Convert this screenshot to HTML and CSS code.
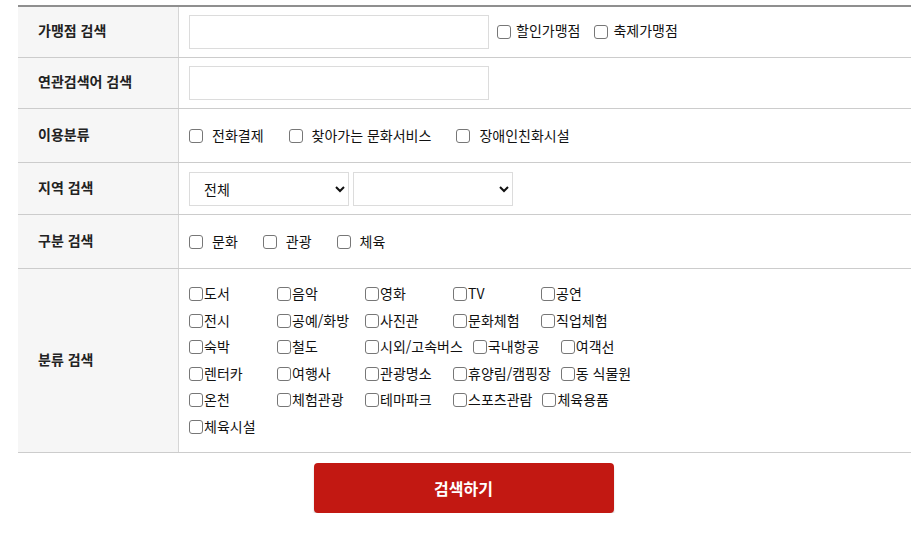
FILE: index.html
```html
<!DOCTYPE html>
<html lang="ko">
<head>
<meta charset="utf-8">
<title>가맹점 검색</title>
<link rel="stylesheet" href="styles.css">
</head>
<body>
<div class="wrap">
  <div class="form">
    <div class="row r1">
      <div class="th">가맹점 검색</div>
      <div class="td">
        <input type="text" class="txt">
        <label class="chk first"><input type="checkbox"><span>할인가맹점</span></label>
        <label class="chk second"><input type="checkbox"><span>축제가맹점</span></label>
      </div>
    </div>
    <div class="row r2">
      <div class="th">연관검색어 검색</div>
      <div class="td"><input type="text" class="txt"></div>
    </div>
    <div class="row r3">
      <div class="th">이용분류</div>
      <div class="td spaced">
        <label class="opt"><input type="checkbox"><span>전화결제</span></label>
        <label class="opt"><input type="checkbox"><span>찾아가는 문화서비스</span></label>
        <label class="opt"><input type="checkbox"><span>장애인친화시설</span></label>
      </div>
    </div>
    <div class="row r4">
      <div class="th">지역 검색</div>
      <div class="td">
        <select class="sel"><option>전체</option></select>
        <select class="sel"><option></option></select>
      </div>
    </div>
    <div class="row r5">
      <div class="th">구분 검색</div>
      <div class="td spaced">
        <label class="opt"><input type="checkbox"><span>문화</span></label>
        <label class="opt"><input type="checkbox"><span>관광</span></label>
        <label class="opt"><input type="checkbox"><span>체육</span></label>
      </div>
    </div>
    <div class="row r6">
      <div class="th">분류 검색</div>
      <div class="td">
        <div class="cats">
          <label class="cat"><input type="checkbox"><span>도서</span></label>
          <label class="cat"><input type="checkbox"><span>음악</span></label>
          <label class="cat"><input type="checkbox"><span>영화</span></label>
          <label class="cat"><input type="checkbox"><span>TV</span></label>
          <label class="cat"><input type="checkbox"><span>공연</span></label>
          <span class="br"></span>
          <label class="cat"><input type="checkbox"><span>전시</span></label>
          <label class="cat"><input type="checkbox"><span>공예/화방</span></label>
          <label class="cat"><input type="checkbox"><span>사진관</span></label>
          <label class="cat"><input type="checkbox"><span>문화체험</span></label>
          <label class="cat"><input type="checkbox"><span>직업체험</span></label>
          <span class="br"></span>
          <label class="cat"><input type="checkbox"><span>숙박</span></label>
          <label class="cat"><input type="checkbox"><span>철도</span></label>
          <label class="cat"><input type="checkbox"><span>시외/고속버스</span></label>
          <label class="cat"><input type="checkbox"><span>국내항공</span></label>
          <label class="cat"><input type="checkbox"><span>여객선</span></label>
          <span class="br"></span>
          <label class="cat"><input type="checkbox"><span>렌터카</span></label>
          <label class="cat"><input type="checkbox"><span>여행사</span></label>
          <label class="cat"><input type="checkbox"><span>관광명소</span></label>
          <label class="cat"><input type="checkbox"><span>휴양림/캠핑장</span></label>
          <label class="cat"><input type="checkbox"><span>동 식물원</span></label>
          <span class="br"></span>
          <label class="cat"><input type="checkbox"><span>온천</span></label>
          <label class="cat"><input type="checkbox"><span>체험관광</span></label>
          <label class="cat"><input type="checkbox"><span>테마파크</span></label>
          <label class="cat"><input type="checkbox"><span>스포츠관람</span></label>
          <label class="cat"><input type="checkbox"><span>체육용품</span></label>
          <span class="br"></span>
          <label class="cat"><input type="checkbox"><span>체육시설</span></label>
        </div>
      </div>
    </div>
  </div>
  <div class="actions">
    <button type="button" class="btn">검색하기</button>
  </div>
</div>
</body>
</html>
```

FILE: styles.css
```css
* { box-sizing: border-box; }
html, body { margin: 0; padding: 0; background: #fff; }
body {
  font-family: "Noto Sans CJK KR", "Noto Sans", sans-serif;
  font-size: 14px;
  color: #222;
}
.wrap {
  width: 893px;
  margin-left: 18px;
  padding-top: 5px;
}
.form {
  border-top: 2px solid #8f8f8f;
}
.row {
  display: grid;
  grid-template-columns: 161px 1fr;
  border-bottom: 1px solid #cccccc;
}
.r1 { height: 51px; }
.r2 { height: 51px; }
.r3 { height: 54px; }
.r4 { height: 52px; }
.r5 { height: 54px; }
.r6 { height: 184px; }
.th {
  background: #f6f6f6;
  border-right: 1px solid #d6d6d6;
  display: flex;
  align-items: center;
  padding-left: 20px;
  padding-bottom: 4px;
  font-weight: bold;
  font-size: 14px;
  color: #222;
}
.td {
  display: flex;
  align-items: center;
  padding: 0 10px;
}
.txt {
  width: 300px;
  height: 34px;
  border: 1px solid #dcdcdc;
  background: #fff;
  margin: 0;
  padding: 0 8px;
  font: inherit;
}
input[type="checkbox"] {
  -webkit-appearance: none;
  appearance: none;
  width: 14px;
  height: 14px;
  margin: 0;
  border: 1px solid #777;
  border-radius: 3px;
  background: #fff;
  flex: none;
}
label {
  display: inline-flex;
  align-items: center;
  white-space: nowrap;
  line-height: 20px;
  color: #111;
}
.chk span { padding-bottom: 4px; }
.opt span { padding-bottom: 2px; }
.cat span { padding-bottom: 2px; }
.chk input { margin-right: 5px; }
.chk.first { margin-left: 8px; }
.chk.second { margin-left: 14px; }
.spaced { gap: 25px; }
.opt input { margin-right: 9px; }
.sel {
  width: 160px;
  height: 34px;
  border: 1px solid #dcdcdc;
  background: #fff;
  margin: 0 4px 0 0;
  padding: 0 6px 0 10px;
  font: inherit;
  color: #111;
}
.cats {
  display: flex;
  flex-wrap: wrap;
  column-gap: 10px;
  width: 100%;
}
.br {
  flex-basis: 100%;
  height: 0;
}
.cat {
  min-width: 78px;
  height: 26.67px;
}
.cat input { margin-right: 1px; }
.actions {
  display: flex;
  justify-content: center;
  padding-top: 10px;
}
.btn {
  width: 300px;
  height: 50px;
  border: none;
  border-radius: 4px;
  background: #c21812;
  color: #fff;
  font-family: "Noto Sans CJK KR", sans-serif;
  font-size: 16px;
  font-weight: bold;
  box-shadow: 0 3px 2px rgba(0, 0, 0, 0.18);
  cursor: pointer;
  margin-left: -2px;
}
```
